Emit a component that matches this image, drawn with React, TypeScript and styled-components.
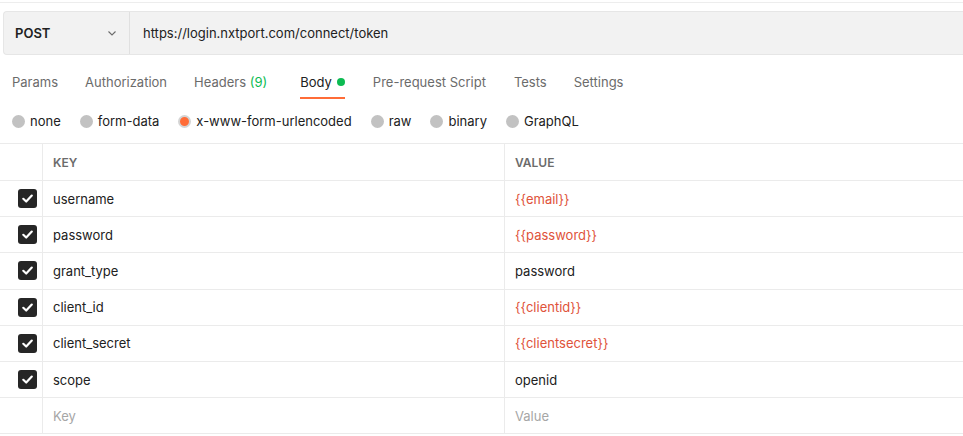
import React from 'react'
import styled, { createGlobalStyle } from 'styled-components'

const GlobalStyle = createGlobalStyle`
    html, body {
        margin: 0;
        padding: 0;
        background: #ffffff;
        font-family: Inter, "Noto Sans", "Liberation Sans", sans-serif;
        font-size: 13px;
        color: #212121;
    }
    * { box-sizing: border-box; }
`

const Page = styled.div`
    width: 963px;
    height: 436px;
    overflow: hidden;
`

const TopRule = styled.div`
    height: 3px;
    border-bottom: 1px solid #ededed;
`

const UrlBar = styled.div`
    display: flex;
    align-items: stretch;
    height: 44px;
    margin: 8px 0 0 3px;
    background: #f2f2f2;
    border: 1px solid #e6e6e6;
    border-right: none;
    border-radius: 4px 0 0 4px;
`

const Method = styled.div`
    width: 126px;
    display: flex;
    align-items: center;
    justify-content: space-between;
    padding: 0 11px 0 11px;
    border-right: 1px solid #e0e0e0;
    font-weight: 600;
    font-size: 13px;
    color: #212121;
`

const Url = styled.div`
    display: flex;
    align-items: center;
    padding-left: 13px;
    font-size: 13px;
    color: #212121;
`

const Tabs = styled.div`
    display: flex;
    gap: 27px;
    padding-left: 12px;
    height: 44px;
`

const Tab = styled.div<{ $active?: boolean; $extra?: number }>`
    position: relative;
    display: flex;
    align-items: center;
    gap: 5px;
    padding-top: 9px;
    margin-right: ${p => p.$extra ?? 0}px;
    font-size: 13px;
    color: ${p => (p.$active ? '#212121' : '#6b6b6b')};
    ${p =>
        p.$active
            ? `&::after {
                content: '';
                position: absolute;
                left: 0;
                right: 0;
                bottom: 0;
                height: 2px;
                background: #ff6c37;
            }`
            : ''}
`

const Count = styled.span`
    color: #0cbb52;
`

const Dot = styled.span`
    width: 8px;
    height: 8px;
    border-radius: 50%;
    background: #0cbb52;
`

const Radios = styled.div`
    display: flex;
    align-items: center;
    gap: 19px;
    padding-left: 12px;
    height: 44px;
`

const RadioItem = styled.label`
    display: flex;
    align-items: center;
    gap: 5px;
    font-size: 13px;
    color: #212121;
`

const RadioCircle = styled.span<{ $on?: boolean }>`
    width: 13px;
    height: 13px;
    border-radius: 50%;
    background: ${p => (p.$on ? '#ff6c37' : '#c2c2c2')};
    border: ${p => (p.$on ? '2px solid #d4d4d4' : 'none')};
`

const Table = styled.div`
    border-top: 1px solid #ebebeb;
`

const Row = styled.div<{ $head?: boolean }>`
    display: grid;
    grid-template-columns: 42px 462px 1fr;
    height: ${p => (p.$head ? '37px' : '36.19px')};
    border-bottom: 1px solid #ebebeb;
`

const Cell = styled.div<{ $tone?: 'var' | 'muted' | 'head' }>`
    display: flex;
    align-items: center;
    padding-left: 10px;
    border-left: 1px solid #ebebeb;
    font-size: ${p => (p.$tone === 'head' ? '12px' : '13px')};
    font-weight: ${p => (p.$tone === 'head' ? 600 : 400)};
    color: ${p =>
        p.$tone === 'var'
            ? '#e0533a'
            : p.$tone === 'muted'
              ? '#a6a6a6'
              : p.$tone === 'head'
                ? '#6b6b6b'
                : '#212121'};
`

const CheckCell = styled.div`
    display: flex;
    align-items: center;
    padding-left: 18px;
`

const Box = styled.span`
    width: 19px;
    height: 19px;
    border-radius: 3px;
    background: #262626;
    display: flex;
    align-items: center;
    justify-content: center;
`

const Chevron = () => (
    <svg width="12" height="12" viewBox="0 0 12 12" fill="none">
        <path d="M2.5 4.5L6 8L9.5 4.5" stroke="#6b6b6b" strokeWidth="1.1" />
    </svg>
)

const Check = () => (
    <svg width="13" height="13" viewBox="0 0 13 13" fill="none">
        <path d="M2.3 6.8L5.2 9.5L10.8 3.6" stroke="#ffffff" strokeWidth="2.2" strokeLinecap="round" strokeLinejoin="round" />
    </svg>
)

const params = [
    { key: 'username', value: '{{email}}', isVar: true },
    { key: 'password', value: '{{password}}', isVar: true },
    { key: 'grant_type', value: 'password', isVar: false },
    { key: 'client_id', value: '{{clientid}}', isVar: true },
    { key: 'client_secret', value: '{{clientsecret}}', isVar: true },
    { key: 'scope', value: 'openid', isVar: false }
]

const bodyTypes = ['none', 'form-data', 'x-www-form-urlencoded', 'raw', 'binary', 'GraphQL']

export default function App() {
    return (
        <Page>
            <GlobalStyle />
            <TopRule />
            <UrlBar>
                <Method>
                    POST
                    <Chevron />
                </Method>
                <Url>https://login.nxtport.com/connect/token</Url>
            </UrlBar>
            <Tabs>
                <Tab>Params</Tab>
                <Tab>Authorization</Tab>
                <Tab $extra={6}>
                    <span>
                        Headers <Count>(9)</Count>
                    </span>
                </Tab>
                <Tab $active $extra={1}>
                    Body <Dot />
                </Tab>
                <Tab $extra={1}>Pre-request Script</Tab>
                <Tab>Tests</Tab>
                <Tab>Settings</Tab>
            </Tabs>
            <Radios>
                {bodyTypes.map(t => (
                    <RadioItem key={t}>
                        <RadioCircle $on={t === 'x-www-form-urlencoded'} />
                        {t}
                    </RadioItem>
                ))}
            </Radios>
            <Table>
                <Row $head>
                    <CheckCell />
                    <Cell $tone="head">KEY</Cell>
                    <Cell $tone="head">VALUE</Cell>
                </Row>
                {params.map(p => (
                    <Row key={p.key}>
                        <CheckCell>
                            <Box>
                                <Check />
                            </Box>
                        </CheckCell>
                        <Cell>{p.key}</Cell>
                        <Cell $tone={p.isVar ? 'var' : undefined}>{p.value}</Cell>
                    </Row>
                ))}
                <Row>
                    <CheckCell />
                    <Cell $tone="muted">Key</Cell>
                    <Cell $tone="muted">Value</Cell>
                </Row>
            </Table>
        </Page>
    )
}
